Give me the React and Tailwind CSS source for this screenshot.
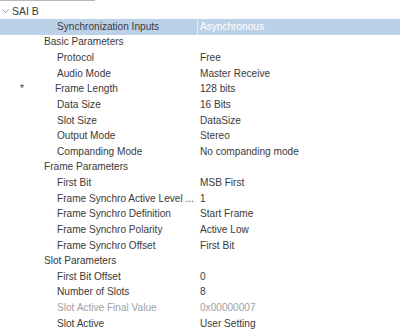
const rows = [
  { label: 'Synchronization Inputs', value: 'Asynchronous', indent: 57, selected: true },
  { label: 'Basic Parameters', indent: 44, group: true },
  { label: 'Protocol', value: 'Free', indent: 57 },
  { label: 'Audio Mode', value: 'Master Receive', indent: 57 },
  { label: 'Frame Length', value: '128 bits', indent: 55, modified: true },
  { label: 'Data Size', value: '16 Bits', indent: 57 },
  { label: 'Slot Size', value: 'DataSize', indent: 57 },
  { label: 'Output Mode', value: 'Stereo', indent: 57 },
  { label: 'Companding Mode', value: 'No companding mode', indent: 57 },
  { label: 'Frame Parameters', indent: 44, group: true },
  { label: 'First Bit', value: 'MSB First', indent: 57 },
  { label: 'Frame Synchro Active Level ...', value: '1', indent: 57 },
  { label: 'Frame Synchro Definition', value: 'Start Frame', indent: 57 },
  { label: 'Frame Synchro Polarity', value: 'Active Low', indent: 57 },
  { label: 'Frame Synchro Offset', value: 'First Bit', indent: 57 },
  { label: 'Slot Parameters', indent: 44, group: true },
  { label: 'First Bit Offset', value: '0', indent: 57 },
  { label: 'Number of Slots', value: '8', indent: 57 },
  { label: 'Slot Active Final Value', value: '0x00000007', indent: 57, disabled: true },
  { label: 'Slot Active', value: 'User Setting', indent: 57 },
];

function Row({ row }) {
  const text = row.disabled ? 'text-[#a0a0a0]' : 'text-[#3a3a3a]';
  return (
    <div className={`flex h-[15.63px] items-center ${row.selected ? 'bg-[#bcd1e7]' : ''}`}>
      <div className="relative w-[197px] shrink-0 whitespace-nowrap overflow-hidden" style={{ paddingLeft: row.indent }}>
        {row.modified && <span className="absolute left-[20px] top-0 text-[#3a3a3a]">*</span>}
        <span className={text}>{row.label}</span>
      </div>
      <div className={`w-px h-full shrink-0 ${row.selected ? 'bg-[#e4ecf5]' : ''}`}></div>
      <div className={`pl-[2px] whitespace-nowrap ${row.selected ? 'text-white' : text}`}>{row.value}</div>
    </div>
  );
}

export default function App() {
  return (
    <div className="w-[400px] h-[330px] bg-white overflow-hidden text-[10.1px] leading-none" style={{ fontFamily: '"Liberation Sans", Arial, sans-serif' }}>
      <div className="w-[95px] h-px bg-[#b8b8b8]"></div>
      <div className="flex h-[18px] items-center pt-[2px]">
        <svg className="ml-[2px] w-[7px] h-[5px]" viewBox="0 0 7 5">
          <path d="M0.5 0.5 L3.5 3.8 L6.5 0.5" fill="none" stroke="#9a9a9a" strokeWidth="1" />
        </svg>
        <span className="ml-[3px] text-[#3a3a3a] text-[10.5px]">SAI B</span>
      </div>
      {rows.map((row) => (
        <Row key={row.label} row={row} />
      ))}
    </div>
  );
}
